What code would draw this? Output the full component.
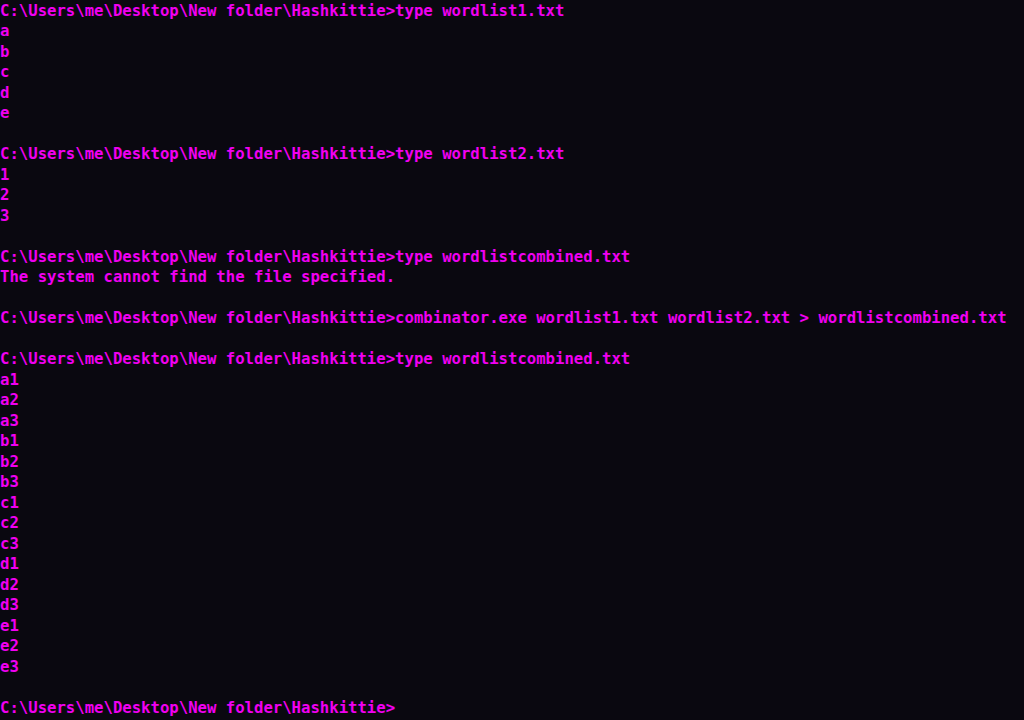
import React from "react";

const P = "C:\\Users\\me\\Desktop\\New folder\\Hashkittie>";

const lines: string[] = [
  P + "type wordlist1.txt",
  "a",
  "b",
  "c",
  "d",
  "e",
  "",
  P + "type wordlist2.txt",
  "1",
  "2",
  "3",
  "",
  P + "type wordlistcombined.txt",
  "The system cannot find the file specified.",
  "",
  P + "combinator.exe wordlist1.txt wordlist2.txt > wordlistcombined.txt",
  "",
  P + "type wordlistcombined.txt",
  "a1",
  "a2",
  "a3",
  "b1",
  "b2",
  "b3",
  "c1",
  "c2",
  "c3",
  "d1",
  "d2",
  "d3",
  "e1",
  "e2",
  "e3",
  "",
  P,
];

export default function App() {
  return (
    <div className="w-[1024px] h-[720px] overflow-hidden bg-[#0a0810] text-[#f000f0] font-['DejaVu_Sans_Mono',monospace] font-bold text-[15.63px] leading-[20.5px] whitespace-pre pt-[0.5px]">
      {lines.map((l, i) => (
        <div key={i} className="h-[20.5px]">
          {l}
        </div>
      ))}
    </div>
  );
}
